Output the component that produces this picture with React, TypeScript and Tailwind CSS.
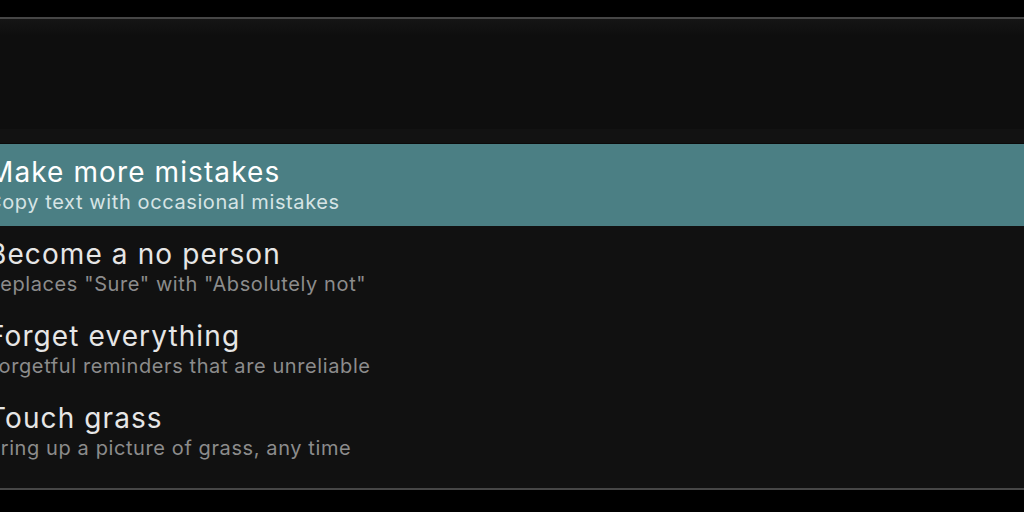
const items = [
  { title: "Make more mistakes", subtitle: "Copy text with occasional mistakes" },
  { title: "Become a no person", subtitle: 'Replaces "Sure" with "Absolutely not"' },
  { title: "Forget everything", subtitle: "Forgetful reminders that are unreliable" },
  { title: "Touch grass", subtitle: "Bring up a picture of grass, any time" },
];

export default function App() {
  const selected = 0;

  return (
    <div className="h-[512px] w-[1024px] overflow-hidden bg-black pt-[17px] font-['Inter',sans-serif]">
      <div className="flex h-[473px] flex-col border-y-2 border-[#464646] bg-[#111111]">
        <div className="h-[17px] bg-gradient-to-b from-[#151515] to-[#0e0e0e]" />
        <div className="h-[93px] bg-[#0e0e0e]" />
        <div className="h-[15px] border-b border-[#0a0a0a] bg-[#121212]" />
        <ul className="flex flex-col">
          {items.map((item, i) => (
            <li
              key={item.title}
              className={
                i === selected
                  ? "flex h-[82px] flex-col bg-[#4b7f84] pt-[12px]"
                  : "flex h-[82px] flex-col pt-[12px]"
              }
            >
              <span
                className={
                  i === selected
                    ? "-ml-[12px] text-[28px] leading-[33px] tracking-[1.1px] text-white"
                    : "-ml-[12px] text-[28px] leading-[33px] tracking-[1.1px] text-[#e6e6e6]"
                }
              >
                {item.title}
              </span>
              <span
                className={
                  i === selected
                    ? "-ml-[13px] mt-[1px] text-[20px] leading-[24px] tracking-[0.6px] text-[#d6e4e5]"
                    : "-ml-[13px] mt-[1px] text-[20px] leading-[24px] tracking-[0.6px] text-[#8c8c8c]"
                }
              >
                {item.subtitle}
              </span>
            </li>
          ))}
        </ul>
      </div>
    </div>
  );
}
